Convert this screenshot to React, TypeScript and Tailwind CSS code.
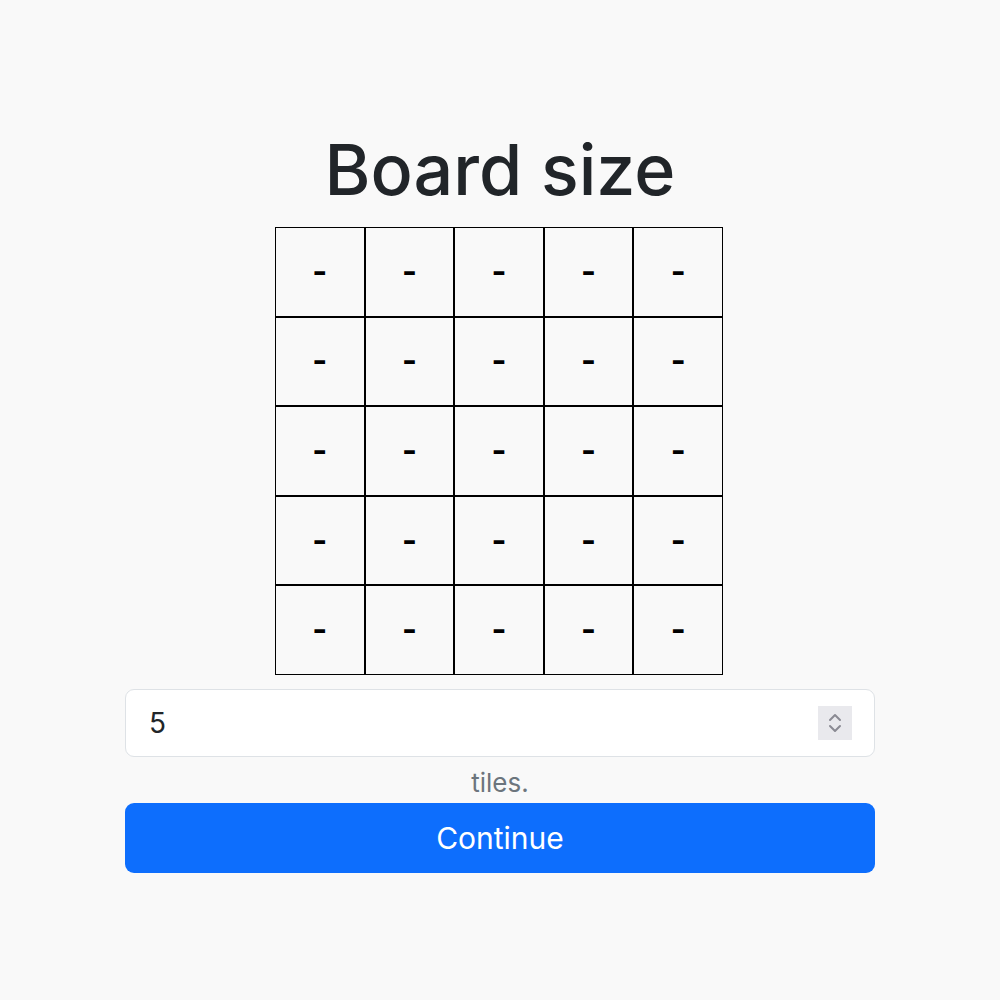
import { useState } from "react";

const SIZE = 5;

function Spinner() {
  return (
    <div className="absolute right-[23px] top-1/2 -translate-y-1/2 flex h-[34px] w-[34px] flex-col items-center justify-center bg-[#e9e9ed]">
      <svg width="16" height="24" viewBox="0 0 16 24" fill="none" stroke="#8a8a93" strokeWidth="2" strokeLinecap="round" strokeLinejoin="round">
        <path d="M3 9 L8 4 L13 9" />
        <path d="M3 15 L8 20 L13 15" />
      </svg>
    </div>
  );
}

export default function App() {
  const [size, setSize] = useState(String(SIZE));
  const n = Math.max(1, Math.min(10, Number(size) || SIZE));
  const cells = Array.from({ length: n * n });

  return (
    <div className="min-h-screen w-full bg-[#f9f9f9] font-['Inter',sans-serif] text-[#212529]">
      <div className="mx-auto flex w-[750px] flex-col items-center pt-[128px]">
        <h1 className="text-[70px] font-medium leading-[1.2] mb-[15px]">Board size</h1>

        {/* board preview */}
        <div className="mr-[2px] grid w-[448px] grid-cols-5">
          {cells.map((_, i) => (
            <div
              key={i}
              className="flex aspect-square items-center justify-center border border-black text-[32px] font-bold text-black"
            >
              -
            </div>
          ))}
        </div>

        <div className="relative mt-[14px] w-full">
          <input
            type="text"
            value={size}
            onChange={(e) => setSize(e.target.value)}
            className="h-[68px] w-full rounded-[9px] border border-[#dee2e6] bg-white px-[23px] text-[28px] text-[#212529] outline-none"
          />
          <Spinner />
        </div>

        <p className="mt-[6px] text-[26px] leading-[1.5] text-[#6c757d]">tiles.</p>

        <button className="mt-[1px] h-[70px] w-full rounded-[9px] bg-[#0d6efd] text-[30px] text-white">
          Continue
        </button>
      </div>
    </div>
  );
}
